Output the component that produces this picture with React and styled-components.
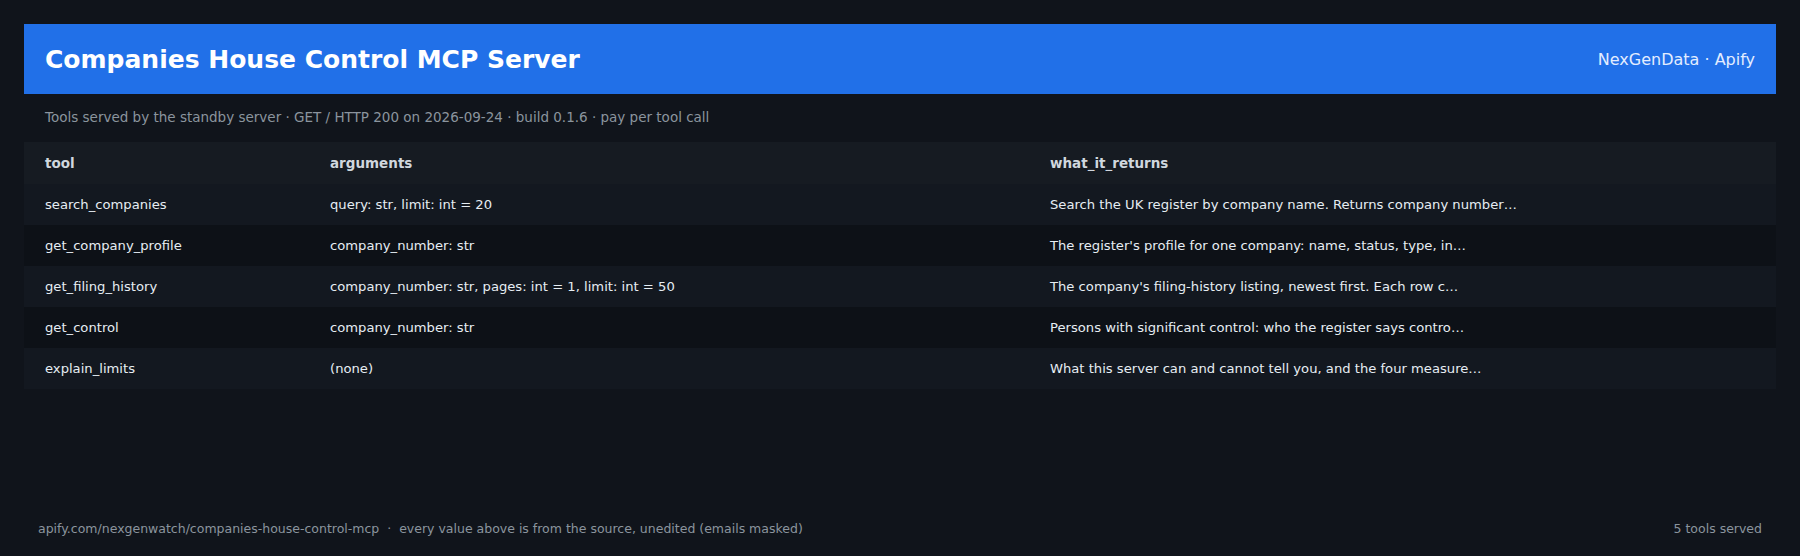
import React from 'react'

import styled, { createGlobalStyle } from 'styled-components'

const GlobalStyle = createGlobalStyle`
  html, body {
    margin: 0;
    padding: 0;
    background: #10141b;
  }

  * {
    box-sizing: border-box;
  }
`

const StyledPage = styled.div`
  min-height: 100vh;
  display: flex;
  flex-direction: column;
  padding: 24px 24px 0;
  background: #10141b;
  font-family: 'DejaVu Sans', 'Liberation Sans', sans-serif;
  color: #e6edf3;
`

const StyledHeader = styled.header`
  height: 70px;
  display: flex;
  align-items: center;
  justify-content: space-between;
  padding: 0 21px;
  background: #2170e8;

  h1 {
    margin: 0;
    font-size: 25px;
    font-weight: bold;
    color: #ffffff;
  }
`

const StyledBrand = styled.span`
  font-size: 16px;
  color: #e3edff;
`

const StyledSubtitle = styled.p`
  margin: 0;
  padding: 14px 21px 16px;
  font-size: 13.5px;
  line-height: 18px;
  color: #8b949e;
`

const StyledTable = styled.div`
  display: flex;
  flex-direction: column;
`

const StyledRow = styled.div`
  display: grid;
  grid-template-columns: 285px 720px 1fr;
  align-items: center;
  height: ${(p) => (p.$head ? '42px' : '41px')};
  background: ${(p) => (p.$head ? '#161b22' : p.$odd ? '#131820' : '#0d1117')};
  font-size: ${(p) => (p.$head ? '13.5px' : '13.15px')};
  font-weight: ${(p) => (p.$head ? 'bold' : 'normal')};
  color: ${(p) => (p.$head ? '#d0d7de' : '#e6edf3')};
`

const StyledCell = styled.div`
  padding: 0 21px;
  white-space: nowrap;
  overflow: hidden;
`

const StyledFooter = styled.footer`
  margin-top: auto;
  display: flex;
  justify-content: space-between;
  padding: 0 14px 19px;
  font-size: 12.5px;
  line-height: 16px;
  color: #8b949e;
`

const tools = [
  ['search_companies', 'query: str, limit: int = 20', 'Search the UK register by company name. Returns company number…'],
  ['get_company_profile', 'company_number: str', "The register's profile for one company: name, status, type, in…"],
  ['get_filing_history', 'company_number: str, pages: int = 1, limit: int = 50', "The company's filing-history listing, newest first. Each row c…"],
  ['get_control', 'company_number: str', 'Persons with significant control: who the register says contro…'],
  ['explain_limits', '(none)', 'What this server can and cannot tell you, and the four measure…'],
]

const App = () => {
  return (
    <StyledPage>
      <GlobalStyle />
      <StyledHeader>
        <h1>Companies House Control MCP Server</h1>
        <StyledBrand>NexGenData · Apify</StyledBrand>
      </StyledHeader>
      <StyledSubtitle>
        Tools served by the standby server · GET / HTTP 200 on 2026-09-24 · build 0.1.6 · pay per tool call
      </StyledSubtitle>
      <StyledTable>
        <StyledRow $head>
          <StyledCell>tool</StyledCell>
          <StyledCell>arguments</StyledCell>
          <StyledCell>what_it_returns</StyledCell>
        </StyledRow>
        {tools.map((t, i) => (
          <StyledRow key={t[0]} $odd={i % 2 === 0}>
            <StyledCell>{t[0]}</StyledCell>
            <StyledCell>{t[1]}</StyledCell>
            <StyledCell>{t[2]}</StyledCell>
          </StyledRow>
        ))}
      </StyledTable>
      <StyledFooter>
        <span>apify.com/nexgenwatch/companies-house-control-mcp &nbsp;·&nbsp; every value above is from the source, unedited (emails masked)</span>
        <span>5 tools served</span>
      </StyledFooter>
    </StyledPage>
  )
}

export default App
